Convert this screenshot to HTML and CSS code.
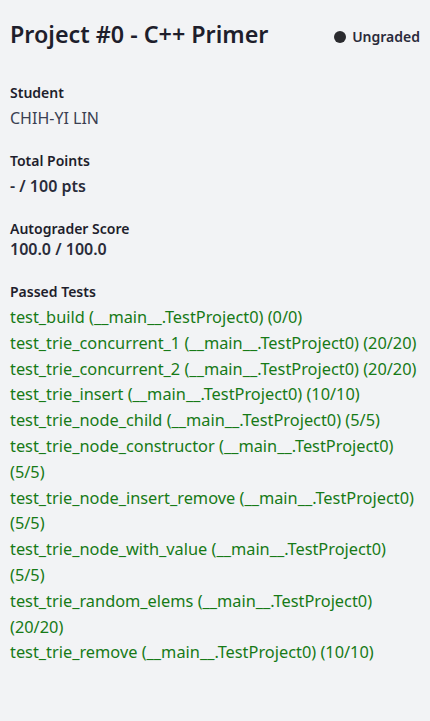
FILE: index.html
```html
<!DOCTYPE html>
<html lang="en">
<head>
<meta charset="utf-8">
<title>Project #0 - C++ Primer</title>
<link rel="stylesheet" href="styles.css">
</head>
<body>
<main class="page">
  <header class="header">
    <h1 class="title">Project #0 - C++ Primer</h1>
    <div class="status"><span class="dot"></span>Ungraded</div>
  </header>
  <section class="field">
    <div class="label">Student</div>
    <div class="value">CHIH-YI LIN</div>
  </section>
  <section class="field">
    <div class="label">Total Points</div>
    <div class="value strong">- / 100 pts</div>
  </section>
  <section class="field score">
    <div class="label">Autograder Score</div>
    <div class="value strong tight">100.0 / 100.0</div>
  </section>
  <section class="field">
    <div class="label">Passed Tests</div>
    <ul class="tests">
      <li>test_build (__main__.TestProject0) (0/0)</li>
      <li>test_trie_concurrent_1 (__main__.TestProject0) (20/20)</li>
      <li>test_trie_concurrent_2 (__main__.TestProject0) (20/20)</li>
      <li>test_trie_insert (__main__.TestProject0) (10/10)</li>
      <li>test_trie_node_child (__main__.TestProject0) (5/5)</li>
      <li>test_trie_node_constructor (__main__.TestProject0) (5/5)</li>
      <li>test_trie_node_insert_remove (__main__.TestProject0) (5/5)</li>
      <li>test_trie_node_with_value (__main__.TestProject0) (5/5)</li>
      <li>test_trie_random_elems (__main__.TestProject0) (20/20)</li>
      <li>test_trie_remove (__main__.TestProject0) (10/10)</li>
    </ul>
  </section>
</main>
</body>
</html>
```

FILE: styles.css
```css
html, body {
  margin: 0;
  padding: 0;
  background: #f2f3f5;
}
body {
  font-family: "Noto Sans", "Open Sans", sans-serif;
  color: #1e1e2c;
}
.page {
  padding: 17px 10px 40px 10px;
  width: 430px;
  box-sizing: border-box;
}
.header {
  display: flex;
  align-items: baseline;
  justify-content: space-between;
  margin-bottom: 31px;
}
.title {
  margin: 0;
  font-size: 23.3px;
  font-weight: 600;
  line-height: 34px;
  color: #1e1e2c;
}
.status {
  display: flex;
  align-items: center;
  gap: 6px;
  font-size: 14px;
  font-weight: 600;
  line-height: 20px;
  color: #2a2a3a;
}
.dot {
  width: 12px;
  height: 12px;
  border-radius: 50%;
  background: #2a2a2e;
}
.field {
  margin-bottom: 18px;
}
.field.score {
  margin-bottom: 23px;
}
.label {
  font-size: 14px;
  font-weight: 600;
  line-height: 22px;
  color: #1e1e2c;
}
.value {
  font-size: 16px;
  line-height: 28px;
  color: #3b3f52;
}
.value.strong {
  font-weight: 600;
  color: #2a2c3a;
}
.value.tight {
  line-height: 18px;
}
.tests {
  list-style: none;
  margin: 2px 0 0 0;
  padding: 0;
  font-size: 16.35px;
  line-height: 25.8px;
  color: #177a17;
}
```
